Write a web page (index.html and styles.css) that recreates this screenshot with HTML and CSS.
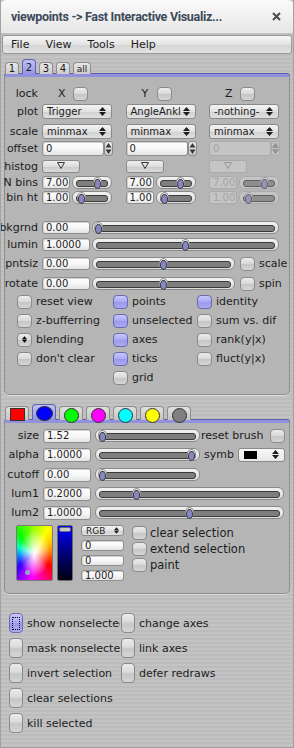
FILE: index.html
```html
<!DOCTYPE html>
<html lang="en">
<head>
    <meta charset="UTF-8">
    <title>viewpoints</title>
    <link rel="stylesheet" href="styles.css">
</head>
<body>
<div class="win">
    <div class="titlebar">
        <span class="title">viewpoints -&gt; Fast Interactive Visualiz...</span>
        <svg class="close" width="9" height="9" viewBox="0 0 9 9"><path d="M1 1 L8 8 M8 1 L1 8" stroke="#4a4a4a" stroke-width="2"/></svg>
    </div>

    <div class="menubar">
        <span>File</span><span>View</span><span>Tools</span><span>Help</span>
    </div>

    <div class="tabs">
        <div class="tab">1</div>
        <div class="tab sel">2</div>
        <div class="tab">3</div>
        <div class="tab">4</div>
        <div class="tab wide">all</div>
    </div>

    <!-- axis / plot panel -->
    <div class="panel view">
        <div class="row">
            <span class="lbl">lock</span>
            <div class="cols">
                <div class="lock"><span class="axis">X</span><span class="chk"></span></div>
                <div class="lock"><span class="axis">Y</span><span class="chk"></span></div>
                <div class="lock"><span class="axis">Z</span><span class="chk"></span></div>
            </div>
        </div>
        <div class="row mt3">
            <span class="lbl">plot</span>
            <div class="cols">
                <div class="choice"><span>Trigger</span><svg class="arr" viewBox="0 0 7 9"><path d="M0 4 3.5 0 7 4ZM0 5 3.5 9 7 5Z"/></svg></div>
                <div class="choice"><span>AngleAnkl</span><svg class="arr" viewBox="0 0 7 9"><path d="M0 4 3.5 0 7 4ZM0 5 3.5 9 7 5Z"/></svg></div>
                <div class="choice"><span>-nothing-</span><svg class="arr" viewBox="0 0 7 9"><path d="M0 4 3.5 0 7 4ZM0 5 3.5 9 7 5Z"/></svg></div>
            </div>
        </div>
        <div class="row mt5">
            <span class="lbl">scale</span>
            <div class="cols">
                <div class="choice"><span>minmax</span><svg class="arr" viewBox="0 0 7 9"><path d="M0 4 3.5 0 7 4ZM0 5 3.5 9 7 5Z"/></svg></div>
                <div class="choice"><span>minmax</span><svg class="arr" viewBox="0 0 7 9"><path d="M0 4 3.5 0 7 4ZM0 5 3.5 9 7 5Z"/></svg></div>
                <div class="choice"><span>minmax</span><svg class="arr" viewBox="0 0 7 9"><path d="M0 4 3.5 0 7 4ZM0 5 3.5 9 7 5Z"/></svg></div>
            </div>
        </div>
        <div class="row mt2">
            <span class="lbl">offset</span>
            <div class="cols">
                <div class="spin"><span class="fld">0</span><span class="spinner"><svg viewBox="0 0 7 13"><path d="M0.5 5.5 3.5 1 6.5 5.5ZM0.5 7.5 3.5 12 6.5 7.5Z"/></svg></span></div>
                <div class="spin"><span class="fld">0</span><span class="spinner"><svg viewBox="0 0 7 13"><path d="M0.5 5.5 3.5 1 6.5 5.5ZM0.5 7.5 3.5 12 6.5 7.5Z"/></svg></span></div>
                <div class="spin off"><span class="fld">0</span><span class="spinner"><svg viewBox="0 0 7 13"><path d="M0.5 5.5 3.5 1 6.5 5.5ZM0.5 7.5 3.5 12 6.5 7.5Z"/></svg></span></div>
            </div>
        </div>
        <div class="row mt3">
            <span class="lbl">histog</span>
            <div class="cols">
                <div><span class="hbtn"><svg width="8" height="7" viewBox="0 0 8 7"><path d="M0.5 0.5H7.5L4 6.5Z" fill="none" stroke="#333"/></svg></span></div>
                <div><span class="hbtn"><svg width="8" height="7" viewBox="0 0 8 7"><path d="M0.5 0.5H7.5L4 6.5Z" fill="none" stroke="#333"/></svg></span></div>
                <div class="off"><span class="hbtn"><svg width="8" height="7" viewBox="0 0 8 7"><path d="M0.5 0.5H7.5L4 6.5Z" fill="none" stroke="#333"/></svg></span></div>
            </div>
        </div>
        <div class="row mt1">
            <span class="lbl">N bins</span>
            <div class="cols">
                <div class="pair"><span class="fld small">7.00</span><span class="sld"><i class="knob" style="left:65%"></i></span></div>
                <div class="pair"><span class="fld small">7.00</span><span class="sld"><i class="knob" style="left:65%"></i></span></div>
                <div class="pair off"><span class="fld small">7.00</span><span class="sld"><i class="knob" style="left:65%"></i></span></div>
            </div>
        </div>
        <div class="row">
            <span class="lbl">bin ht</span>
            <div class="cols">
                <div class="pair"><span class="fld small">1.00</span><span class="sld"><i class="knob" style="left:23%"></i></span></div>
                <div class="pair"><span class="fld small">1.00</span><span class="sld"><i class="knob" style="left:23%"></i></span></div>
                <div class="pair off"><span class="fld small">1.00</span><span class="sld"><i class="knob" style="left:23%"></i></span></div>
            </div>
        </div>

        <div class="row mt15">
            <span class="lbl">bkgrnd</span>
            <span class="fld mid">0.00</span>
            <span class="sld long"><i class="knob" style="left:3%"></i></span>
        </div>
        <div class="row mt2">
            <span class="lbl">lumin</span>
            <span class="fld mid">1.0000</span>
            <span class="sld long"><i class="knob" style="left:50%"></i></span>
        </div>
        <div class="row mt4">
            <span class="lbl">pntsiz</span>
            <span class="fld mid">0.00</span>
            <span class="sld short"><i class="knob" style="left:50%"></i></span>
            <span class="chk after"></span><span class="side">scale</span>
        </div>
        <div class="row mt5">
            <span class="lbl">rotate</span>
            <span class="fld mid">0.00</span>
            <span class="sld short"><i class="knob" style="left:50%"></i></span>
            <span class="chk after"></span><span class="side">spin</span>
        </div>

        <div class="checks mt3">
            <label class="ck"><span class="chk"></span>reset view</label>
            <label class="ck"><span class="chk on"></span>points</label>
            <label class="ck"><span class="chk on"></span>identity</label>
            <label class="ck"><span class="chk"></span>z-bufferring</label>
            <label class="ck"><span class="chk on"></span>unselected</label>
            <label class="ck"><span class="chk"></span>sum vs. dif</label>
            <label class="ck"><span class="chk menu"><svg width="5" height="7" viewBox="0 0 7 9"><path d="M0 4 3.5 0 7 4ZM0 5 3.5 9 7 5Z"/></svg></span>blending</label>
            <label class="ck"><span class="chk on"></span>axes</label>
            <label class="ck"><span class="chk"></span>rank(y|x)</label>
            <label class="ck"><span class="chk"></span>don't clear</label>
            <label class="ck"><span class="chk on"></span>ticks</label>
            <label class="ck"><span class="chk"></span>fluct(y|x)</label>
            <span></span>
            <label class="ck"><span class="chk"></span>grid</label>
        </div>
    </div>

    <div class="ctabs">
        <div class="ctab"><i class="swatch red"></i></div>
        <div class="ctab sel"><i class="dot big blue"></i></div>
        <div class="ctab"><i class="dot green"></i></div>
        <div class="ctab"><i class="dot magenta"></i></div>
        <div class="ctab"><i class="dot cyan"></i></div>
        <div class="ctab"><i class="dot yellow"></i></div>
        <div class="ctab"><i class="dot gray"></i></div>
    </div>

    <!-- brush panel -->
    <div class="panel brush">
        <div class="row b">
            <span class="lbl">size</span>
            <span class="fld mid">1.52</span>
            <span class="sld brushsld"><i class="knob" style="left:7%"></i></span>
            <span class="note">reset brush</span>
            <span class="chk push"></span>
        </div>
        <div class="row b mt4">
            <span class="lbl">alpha</span>
            <span class="fld mid">1.0000</span>
            <span class="sld brushsld"><i class="knob" style="left:93%"></i></span>
            <span class="note wide">symb</span>
            <div class="choice symb push"><i class="square"></i><svg class="arr" viewBox="0 0 7 9"><path d="M0 4 3.5 0 7 4ZM0 5 3.5 9 7 5Z"/></svg></div>
        </div>
        <div class="row b mt5">
            <span class="lbl">cutoff</span>
            <span class="fld mid">0.00</span>
            <span class="sld brushsld"><i class="knob" style="left:7%"></i></span>
        </div>
        <div class="row b mt4">
            <span class="lbl">lum1</span>
            <span class="fld mid">0.2000</span>
            <span class="sld full"><i class="knob" style="left:22%"></i></span>
        </div>
        <div class="row b mt4">
            <span class="lbl">lum2</span>
            <span class="fld mid">1.0000</span>
            <span class="sld full"><i class="knob" style="left:50%"></i></span>
        </div>

        <div class="chooser mt5">
            <div class="wheel"><i class="marker"></i></div>
            <div class="valbar"><i class="handle"></i></div>
            <div class="rgb">
                <div class="choice tiny"><span>RGB</span><svg class="arr" viewBox="0 0 7 9"><path d="M0 4 3.5 0 7 4ZM0 5 3.5 9 7 5Z"/></svg></div>
                <span class="fld tiny">0</span>
                <span class="fld tiny">0</span>
                <span class="fld tiny">1.000</span>
            </div>
            <div class="selops">
                <label class="ck"><span class="chk"></span>clear selection</label>
                <label class="ck"><span class="chk"></span>extend selection</label>
                <label class="ck"><span class="chk"></span>paint</label>
            </div>
        </div>
    </div>

    <div class="actions">
        <label class="act"><span class="chk tall on focus"></span><span class="txt">show nonselected</span></label>
        <label class="act"><span class="chk tall"></span><span class="txt">change axes</span></label>
        <label class="act"><span class="chk tall"></span><span class="txt">mask nonselected</span></label>
        <label class="act"><span class="chk tall"></span><span class="txt">link axes</span></label>
        <label class="act"><span class="chk tall"></span><span class="txt">invert selection</span></label>
        <label class="act"><span class="chk tall"></span><span class="txt">defer redraws</span></label>
        <label class="act"><span class="chk tall"></span><span class="txt">clear selections</span></label>
        <span></span>
        <label class="act"><span class="chk tall"></span><span class="txt">kill selected</span></label>
    </div>
</div>
</body>
</html>
```

FILE: styles.css
```css
* {
    box-sizing: border-box;
}
body {
    margin: 0;
    font-family: "DejaVu Sans", sans-serif;
    font-size: 11px;
    color: #1c1c1c;
    background: #fff;
}
i {
    display: block;
    font-style: normal;
}
.win {
    width: 294px;
    height: 748px;
    overflow: hidden;
    border: 1px solid #a2a2a2;
    border-top: none;
    background: repeating-linear-gradient(#c3c3c3 0 2px, #bcbcbc 2px 4px);
}

/* title + menu */
.titlebar {
    height: 34px;
    margin: 0 -1px;
    display: flex;
    align-items: center;
    justify-content: space-between;
    padding: 0 13px 0 11px;
    background: linear-gradient(#fafafa, #e6e6e6);
    border-bottom: 1px solid #c2c2c2;
    border-radius: 6px 6px 0 0;
}
.title {
    font-family: Roboto, sans-serif;
    font-weight: bold;
    font-size: 12.5px;
    letter-spacing: -0.3px;
    color: #3c4958;
}
.menubar {
    height: 19px;
    margin: 1px 1px 0;
    display: flex;
    align-items: center;
    border: 1px solid #9a9a9a;
    border-radius: 3px;
    background: linear-gradient(#f6f6f6, #e4e4e4 50%, #d6d6d6 55%, #e2e2e2);
}
.menubar span {
    padding: 0 8px;
}

/* page tabs */
.tabs {
    height: 20px;
    display: flex;
    align-items: flex-end;
    gap: 3px;
    padding-left: 4px;
}
.tab {
    width: 14px;
    height: 12px;
    border: 1px solid #8c8c8c;
    border-bottom: none;
    border-radius: 4px 4px 0 0;
    background: linear-gradient(#e8e8e8, #cacaca);
    text-align: center;
    font-size: 10px;
    line-height: 12px;
}
.tab.wide {
    width: 18px;
    font-size: 9px;
}
.tab.sel {
    height: 15px;
    line-height: 15px;
    border-color: #6262b2;
    background: linear-gradient(#c0c0f6, #9494e2);
}

/* panels */
.panel {
    margin-left: 3px;
    width: 286px;
    background: #b5b5b5;
    border: 1px solid #8e8e8e;
    border-top: 3px solid #9292dc;
    border-radius: 3px 3px 5px 5px;
    box-shadow: 0 -1px 0 #5e5eaa, 0 1px 0 #dcdcdc;
}
.view {
    padding: 9px 0 9px;
}
.brush {
    padding: 5px 0 12px;
}
.row {
    height: 15px;
    display: flex;
    align-items: center;
}
.mt1 { margin-top: 1px; }
.mt2 { margin-top: 2px; }
.mt3 { margin-top: 3px; }
.mt4 { margin-top: 4px; }
.mt5 { margin-top: 5px; }
.mt6 { margin-top: 6px; }
.mt15 { margin-top: 15px; }

.lbl {
    flex: none;
    width: 33px;
    margin-right: 4px;
    display: flex;
    justify-content: flex-end;
    white-space: nowrap;
}
.b .lbl {
    width: 34px;
}
.cols {
    display: grid;
    grid-template-columns: 70px 70px 70px;
    column-gap: 13.5px;
    align-items: center;
}
.lock {
    display: flex;
    align-items: center;
    padding-left: 16px;
}
.axis {
    width: 15px;
}

/* widgets */
.chk {
    flex: none;
    width: 15px;
    height: 14px;
    border: 1px solid #8a8a8a;
    border-radius: 4px;
    background: linear-gradient(#ececec, #dadada 45%, #c6c6c6 55%, #d6d6d6);
    position: relative;
}
.chk.on {
    border-color: #6a6ab2;
    background: linear-gradient(#c8c8ff, #ababf5 45%, #9a9aea 55%, #ababf2);
}
.chk.menu {
    display: flex;
    align-items: center;
    justify-content: center;
}
.chk.tall {
    width: 14px;
    height: 20px;
}
.chk.focus::after {
    content: "";
    position: absolute;
    left: 2px;
    top: 3px;
    width: 6px;
    height: 11px;
    border: 1px dotted #111;
}
.fld {
    flex: none;
    display: block;
    height: 14px;
    line-height: 12px;
    padding-left: 3px;
    font-size: 10px;
    border: 1px solid #8e8e8e;
    border-radius: 3px;
    background: linear-gradient(#ffffff, #f6f6f6 55%, #e4e4e4);
    box-shadow: inset 1px 1px 0 #d0d0d0;
    white-space: nowrap;
    overflow: hidden;
}
.fld.small {
    width: 28px;
    height: 13px;
    line-height: 11px;
}
.fld.mid {
    width: 48px;
    height: 13px;
    line-height: 11px;
}
.b .fld.mid {
    height: 14px;
    line-height: 12px;
}
.choice {
    height: 15px;
    display: flex;
    align-items: center;
    justify-content: space-between;
    padding: 0 5px 0 4px;
    font-size: 10px;
    border: 1px solid #8a8a8a;
    border-radius: 3px;
    background: linear-gradient(#f4f4f4, #e2e2e2 50%, #d2d2d2 55%, #e0e0e0);
    white-space: nowrap;
}
.arr {
    flex: none;
    width: 7px;
    height: 9px;
    fill: #1c1c1c;
}
.spin {
    display: flex;
    width: 71px;
}
.spin .fld {
    width: 62px;
    height: 15px;
    line-height: 13px;
}
.spinner {
    display: flex;
    align-items: center;
    justify-content: center;
    width: 9px;
    height: 15px;
    border: 1px solid #8a8a8a;
    border-radius: 3px;
    background: linear-gradient(#ececec, #c8c8c8);
}
.spinner svg {
    width: 7px;
    height: 13px;
    fill: #3a3a3a;
}
.hbtn {
    width: 38px;
    height: 13px;
    display: flex;
    justify-content: center;
    padding-top: 1px;
    border: 1px solid #8a8a8a;
    border-radius: 3px;
    background: linear-gradient(#f0f0f0, #dcdcdc 50%, #cccccc 55%, #dadada);
}
.pair {
    display: flex;
    align-items: center;
    gap: 2px;
}
.sld {
    flex: none;
    display: block;
    position: relative;
    width: 40px;
    height: 13px;
    border: 1px solid #8a8a8a;
    border-radius: 6px;
    background: linear-gradient(#f2f2f2, #dcdcdc);
}
.sld::before {
    content: "";
    position: absolute;
    left: 3px;
    right: 3px;
    top: 3px;
    height: 5px;
    border: 1px solid #3c3c3c;
    border-radius: 3px;
    background: #7e7e7e;
}
.knob {
    position: absolute;
    top: 0;
    width: 9px;
    height: 11px;
    margin-left: -5px;
    border: 1px solid #8a8a8a;
    border-radius: 50%;
    background: #ececec;
}
.knob::after {
    content: "";
    display: block;
    margin: 0 auto;
    margin-top: 0.5px;
    width: 5px;
    height: 8px;
    border: 1px solid #3a3a3a;
    border-radius: 50%;
    background: #8787c4;
}
.sld.long {
    width: 187px;
    margin-left: 2px;
}
.sld.short {
    width: 143px;
    margin-left: 2px;
}
.chk.after {
    margin-left: 5px;
    margin-right: 4px;
}
.brushsld {
    width: 105px;
    margin-left: 4px;
}
.sld.full {
    width: 189px;
    margin-left: 4px;
}
.note {
    margin-left: 1px;
}
.note.wide {
    margin-left: 4px;
}
.push {
    margin-left: auto;
    margin-right: 4px;
}
.symb {
    width: 47px;
    height: 14px;
    padding-left: 5px;
    background: linear-gradient(#f8f8f8, #e8e8e8);
}
.square {
    width: 13px;
    height: 8px;
    background: #000;
}

/* disabled column */
.off {
    color: #9c9c9c;
}
.off .fld, .off .spinner, .off .hbtn, .off .sld {
    border-color: #a8a8a8;
    background: #cdcdcd;
    box-shadow: none;
    opacity: 0.7;
}
.off svg path {
    stroke: #8a8a8a;
}
.off .spinner svg {
    fill: #8a8a8a;
}

/* toggles */
.checks {
    display: grid;
    grid-template-columns: 96px 84px 1fr;
    row-gap: 4px;
    padding-left: 12px;
}
.ck {
    height: 15px;
    display: flex;
    align-items: center;
    gap: 4px;
    white-space: nowrap;
}

/* colour tabs */
.ctabs {
    height: 25px;
    display: flex;
    align-items: flex-end;
    gap: 3px;
    padding-left: 4px;
}
.ctab {
    width: 24px;
    height: 14px;
    display: flex;
    justify-content: center;
    padding-top: 1px;
    border: 1px solid #8c8c8c;
    border-bottom: none;
    border-radius: 4px 4px 0 0;
    background: linear-gradient(#e0e0e0, #c4c4c4);
}
.ctab.sel {
    height: 16px;
    border-color: #6262b2;
    background: linear-gradient(#c0c0f6, #9494e2);
}
.swatch {
    width: 15px;
    height: 13px;
    border: 1px solid #333;
}
.dot {
    width: 15px;
    height: 15px;
    border: 1px solid #333;
    border-radius: 50%;
}
.dot.big {
    width: 17px;
    height: 15px;
}
.red { background: #ff0000; }
.blue { background: #0000ff; }
.green { background: #00ff00; }
.magenta { background: #ff00ff; }
.cyan { background: #00ffff; }
.yellow { background: #ffff00; }
.gray { background: #808080; }

/* colour chooser */
.chooser {
    height: 56px;
    display: flex;
    padding-left: 11px;
}
.wheel {
    width: 37px;
    height: 56px;
    position: relative;
    border: 1px solid #7a7a7a;
    border-radius: 2px;
    background:
        radial-gradient(ellipse at 50% 50%, #fff 0, rgba(255,255,255,0.85) 12%, rgba(255,255,255,0) 62%),
        conic-gradient(from 0deg at 50% 50%, #a0ff00, #ffff00 30deg, #ff9000 80deg, #ff0000 130deg, #ff00ff 185deg, #3000ff 230deg, #00a0ff 265deg, #00ffc0 290deg, #00ff00 320deg, #a0ff00);
}
.marker {
    position: absolute;
    left: 8px;
    bottom: 5px;
    width: 5px;
    height: 5px;
    border-radius: 50%;
    background: #9aa2c8;
}
.valbar {
    width: 16px;
    height: 56px;
    margin-left: 4px;
    position: relative;
    border: 1px solid #6a6a6a;
    border-radius: 2px;
    background: linear-gradient(#0000ff, #00007a 50%, #000010);
}
.handle {
    position: absolute;
    left: 1px;
    right: 1px;
    top: 1px;
    height: 5px;
    border: 1px solid #6e6e6e;
    border-radius: 2px;
    background: #c8c8c8;
}
.rgb {
    width: 43px;
    margin-left: 8px;
    display: flex;
    flex-direction: column;
    gap: 4px;
}
.choice.tiny {
    height: 11px;
    font-size: 9px;
    padding: 0 4px 0 4px;
}
.choice.tiny .arr {
    width: 5px;
    height: 7px;
}
.fld.tiny {
    height: 11px;
    line-height: 9px;
}
.selops {
    margin-left: 8px;
    display: flex;
    flex-direction: column;
    gap: 1px;
}
.selops .ck {
    height: 15px;
    gap: 3px;
    font-size: 11.5px;
}

/* bottom buttons */
.actions {
    margin-top: 19px;
    display: grid;
    grid-template-columns: 112px 1fr;
    row-gap: 5px;
    padding-left: 8px;
}
.act {
    height: 20px;
    display: flex;
    align-items: center;
    gap: 4px;
    white-space: nowrap;
}
.act .txt {
    width: 93px;
    overflow: hidden;
}
```
